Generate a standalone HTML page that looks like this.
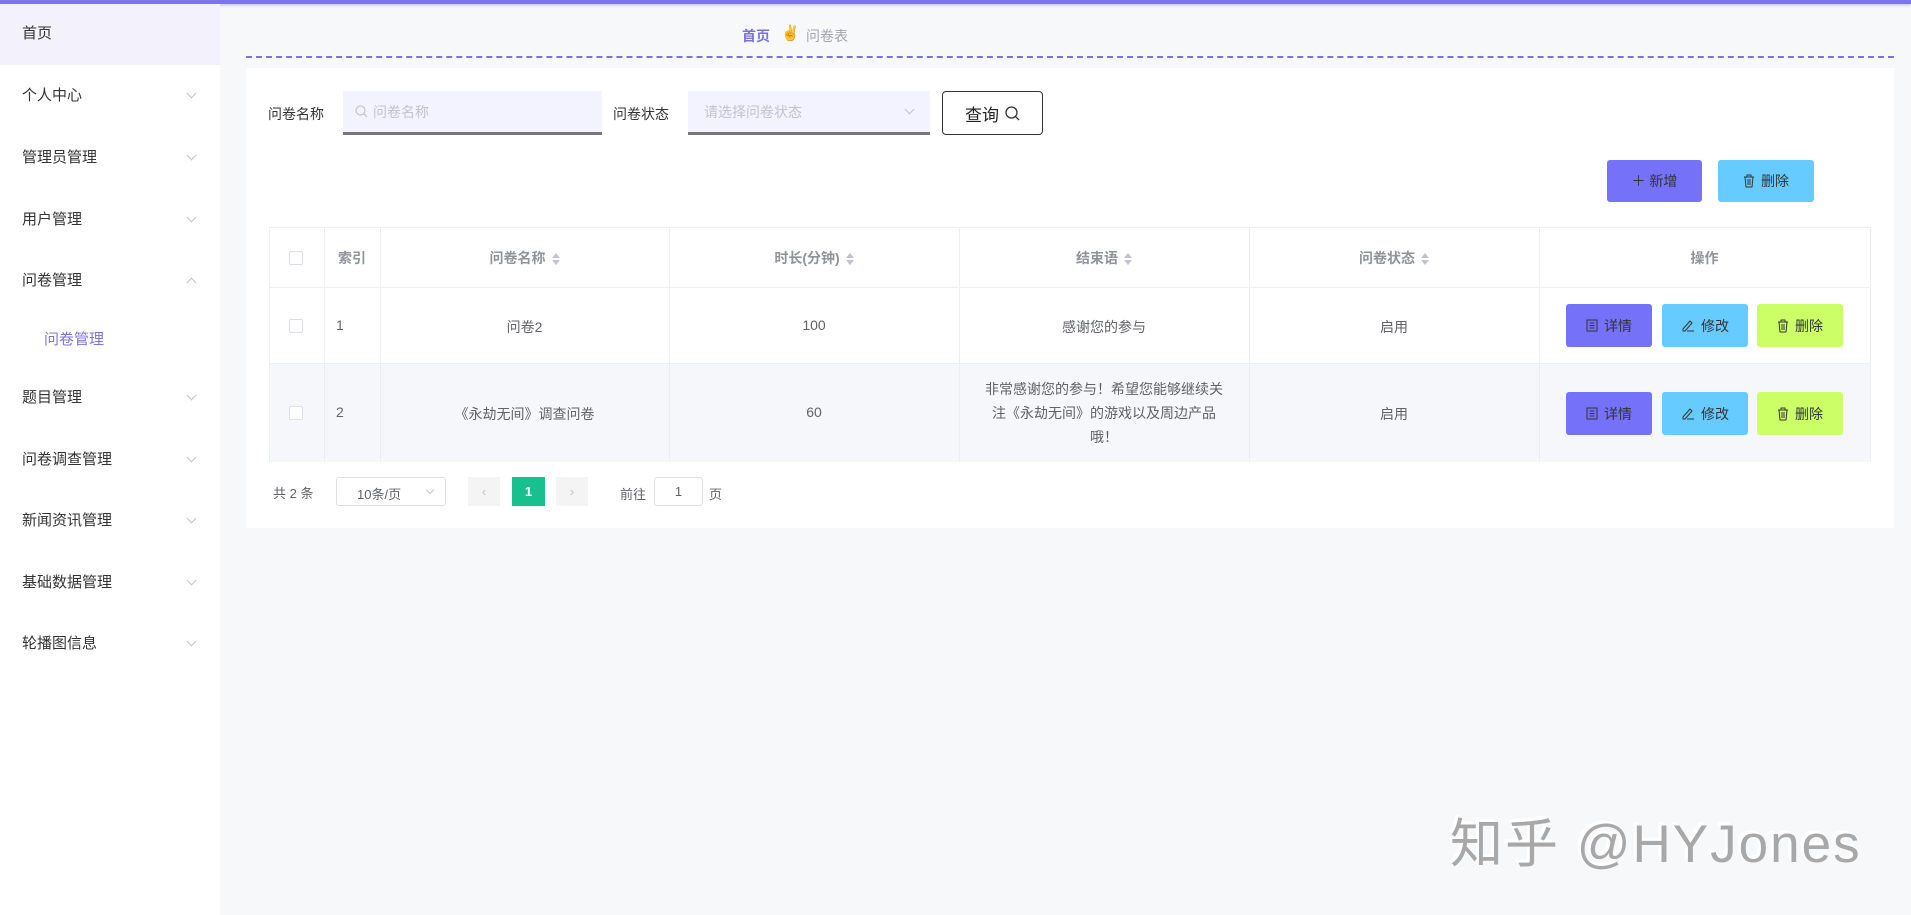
<!DOCTYPE html>
<html><head><meta charset="utf-8"><style>
*{margin:0;padding:0;box-sizing:border-box}
body{width:1911px;height:915px;background:#f7f8fa;font-family:"Liberation Sans","Noto Sans CJK SC",sans-serif;position:relative;overflow:hidden;color:#333}
.a{position:absolute}
.top{left:0;top:0;width:1911px;height:4px;background:#7b74ee;box-shadow:0 1px 3px rgba(100,90,230,.4)}
.side{left:0;top:4px;width:220px;height:911px;background:#fff}
.mi{position:absolute;left:22px;font-size:15px;color:#333;line-height:20px}
.chev{position:absolute;left:188px;width:7px;height:7px;border-right:1px solid #c0c4cc;border-bottom:1px solid #c0c4cc;transform:rotate(45deg)}
.chevu{transform:rotate(-135deg)}
.card{left:246px;top:68px;width:1648px;height:460px;background:#fff}
.lbl{font-size:14px;color:#333}
.inp{background:#f3f2ff;border-bottom:3px solid #777;font-size:14px;color:#c0c4cc;display:flex;align-items:center;gap:5px}
.btn{position:absolute;border-radius:3px;font-size:14px;color:#333;display:flex;align-items:center;justify-content:center;gap:6px}
.tbl{left:269px;top:227px;width:1602px;height:235px;border:1px solid #ebeef5}
.vl{position:absolute;top:0;width:1px;height:234px;background:#ebeef5}
.hl{position:absolute;left:0;width:1600px;height:1px;background:#ebeef5}
.c{position:absolute;font-size:14px;color:#606266;text-align:center}
.h{color:#909399;font-weight:bold}
.cb{position:absolute;left:19px;width:14px;height:14px;border:1px solid #dcdfe6;border-radius:2px;background:#fff}
.sort{display:inline-block;vertical-align:middle;margin-left:6px;width:8px;height:12px;position:relative}
.sort:before{content:"";position:absolute;left:0;top:0;border:4px solid transparent;border-bottom:5px solid #c0c4cc;border-top:0}
.sort:after{content:"";position:absolute;left:0;top:7px;border:4px solid transparent;border-top:5px solid #c0c4cc;border-bottom:0}
svg{display:block}
</style></head><body>
<div class="a top"></div>
<div class="a side">
 <div class="a" style="left:0;top:0;width:220px;height:61px;background:#f3f2fc"></div>
 <div class="mi" style="top:20px">首页</div>
 <div class="mi" style="top:82px">个人中心</div><div class="chev" style="top:86px"></div>
 <div class="mi" style="top:144px">管理员管理</div><div class="chev" style="top:148px"></div>
 <div class="mi" style="top:206px">用户管理</div><div class="chev" style="top:210px"></div>
 <div class="mi" style="top:267px">问卷管理</div><div class="chev chevu" style="top:275px"></div>
 <div class="mi" style="top:326px;left:44px;color:#7b74d8">问卷管理</div>
 <div class="mi" style="top:384px">题目管理</div><div class="chev" style="top:388px"></div>
 <div class="mi" style="top:446px">问卷调查管理</div><div class="chev" style="top:450px"></div>
 <div class="mi" style="top:507px">新闻资讯管理</div><div class="chev" style="top:511px"></div>
 <div class="mi" style="top:569px">基础数据管理</div><div class="chev" style="top:573px"></div>
 <div class="mi" style="top:630px">轮播图信息</div><div class="chev" style="top:634px"></div>
</div>
<div class="a" style="left:742px;top:26px;font-size:14px;font-weight:bold;color:#7b74d8">首页</div>
<div class="a" style="left:781px;top:24px;font-size:15px">✌️</div>
<div class="a" style="left:806px;top:26px;font-size:14px;color:#a0a4ad">问卷表</div>
<div class="a" style="left:246px;top:56px;width:1648px;border-top:2px dashed #7b74d8"></div>
<div class="a card"></div>
<div class="a lbl" style="left:268px;top:104px">问卷名称</div>
<div class="a inp" style="left:343px;top:91px;width:259px;height:44px;padding:0 0 0 12px"><svg width="13" height="13" viewBox="0 0 13 13"><circle cx="5.5" cy="5.5" r="4.5" fill="none" stroke="#c0c4cc" stroke-width="1.2"/><path d="M9 9l3 3" stroke="#c0c4cc" stroke-width="1.2"/></svg>问卷名称</div>
<div class="a lbl" style="left:613px;top:104px">问卷状态</div>
<div class="a inp" style="left:688px;top:91px;width:242px;height:44px;padding:0 0 0 16px">请选择问卷状态</div>
<div class="chev" style="left:906px;top:106px"></div>
<div class="btn" style="left:942px;top:91px;width:101px;height:44px;border:1px solid #333;border-radius:4px;font-size:17px;color:#222">查询 <svg width="15" height="15" viewBox="0 0 15 15"><circle cx="6.5" cy="6.5" r="5.5" fill="none" stroke="#333" stroke-width="1.3"/><path d="M10.5 10.5l3.5 3.5" stroke="#333" stroke-width="1.3"/></svg></div>
<div class="btn" style="left:1607px;top:160px;width:95px;height:42px;background:#7571f9;color:#333">＋ 新增</div>
<div class="btn" style="left:1718px;top:160px;width:96px;height:42px;background:#66ccff;color:#333"><svg width="12" height="14" viewBox="0 0 12 14"><path d="M1 3h10M4 3V1h4v2M2 3l1 10h6l1-10M5 5v6M7 5v6" fill="none" stroke="#333" stroke-width="1"/></svg>删除</div>
<div class="a tbl">
 <div class="a" style="left:0;top:136px;width:1600px;height:98px;background:#f5f7fa"></div>
 <div class="vl" style="left:54px"></div><div class="vl" style="left:110px"></div><div class="vl" style="left:399px"></div><div class="vl" style="left:689px"></div><div class="vl" style="left:979px"></div><div class="vl" style="left:1269px"></div>
 <div class="hl" style="top:59px"></div><div class="hl" style="top:135px"></div>
 <div class="cb" style="top:23px"></div><div class="cb" style="top:91px"></div><div class="cb" style="top:178px"></div>
 <div class="c h" style="left:54px;width:56px;top:20px">索引</div>
 <div class="c h" style="left:110px;width:289px;top:20px">问卷名称<span class="sort"></span></div>
 <div class="c h" style="left:399px;width:290px;top:20px">时长(分钟)<span class="sort"></span></div>
 <div class="c h" style="left:689px;width:290px;top:20px">结束语<span class="sort"></span></div>
 <div class="c h" style="left:979px;width:290px;top:20px">问卷状态<span class="sort"></span></div>
 <div class="c h" style="left:1269px;width:331px;top:20px">操作</div>
 <div class="c" style="left:66px;top:89px">1</div>
 <div class="c" style="left:110px;width:289px;top:89px">问卷2</div>
 <div class="c" style="left:399px;width:290px;top:89px">100</div>
 <div class="c" style="left:689px;width:290px;top:89px">感谢您的参与</div>
 <div class="c" style="left:979px;width:290px;top:89px">启用</div>
 <div class="c" style="left:66px;top:176px">2</div>
 <div class="c" style="left:110px;width:289px;top:176px">《永劫无间》调查问卷</div>
 <div class="c" style="left:399px;width:290px;top:176px">60</div>
 <div class="c" style="left:712px;width:244px;top:149px;line-height:24px">非常感谢您的参与！希望您能够继续关注《永劫无间》的游戏以及周边产品哦！</div>
 <div class="c" style="left:979px;width:290px;top:176px">启用</div>
</div>
<div class="btn" style="left:1566px;top:304px;width:86px;height:43px;background:#7571f9"><svg width="12" height="13" viewBox="0 0 12 13"><path d="M1 1h10v11H1zM3.5 4h5M3.5 6.5h5M3.5 9h5" fill="none" stroke="#333" stroke-width="1"/></svg>详情</div>
<div class="btn" style="left:1662px;top:304px;width:86px;height:43px;background:#66ccff"><svg width="14" height="13" viewBox="0 0 14 13"><path d="M2 10l7-8 2 2-7 8H2zM6 12h7" fill="none" stroke="#333" stroke-width="1"/></svg>修改</div>
<div class="btn" style="left:1757px;top:304px;width:86px;height:43px;background:#ccff66"><svg width="12" height="14" viewBox="0 0 12 14"><path d="M1 3h10M4 3V1h4v2M2 3l1 10h6l1-10M5 5v6M7 5v6" fill="none" stroke="#333" stroke-width="1"/></svg>删除</div>
<div class="btn" style="left:1566px;top:392px;width:86px;height:43px;background:#7571f9"><svg width="12" height="13" viewBox="0 0 12 13"><path d="M1 1h10v11H1zM3.5 4h5M3.5 6.5h5M3.5 9h5" fill="none" stroke="#333" stroke-width="1"/></svg>详情</div>
<div class="btn" style="left:1662px;top:392px;width:86px;height:43px;background:#66ccff"><svg width="14" height="13" viewBox="0 0 14 13"><path d="M2 10l7-8 2 2-7 8H2zM6 12h7" fill="none" stroke="#333" stroke-width="1"/></svg>修改</div>
<div class="btn" style="left:1757px;top:392px;width:86px;height:43px;background:#ccff66"><svg width="12" height="14" viewBox="0 0 12 14"><path d="M1 3h10M4 3V1h4v2M2 3l1 10h6l1-10M5 5v6M7 5v6" fill="none" stroke="#333" stroke-width="1"/></svg>删除</div>
<div class="a" style="left:273px;top:483px;font-size:13px;color:#606266">共 2 条</div>
<div class="a" style="left:336px;top:477px;width:110px;height:29px;border:1px solid #dcdfe6;border-radius:3px;font-size:13px;color:#606266;padding:6px 0 0 20px">10条/页</div>
<div class="chev" style="left:427px;top:487px;width:6px;height:6px"></div>
<div class="a" style="left:468px;top:477px;width:32px;height:29px;background:#f4f4f5;color:#c0c4cc;text-align:center;line-height:29px;font-size:13px">‹</div>
<div class="a" style="left:512px;top:477px;width:33px;height:29px;background:#19c08f;color:#fff;text-align:center;line-height:29px;font-size:13px;font-weight:bold">1</div>
<div class="a" style="left:556px;top:477px;width:32px;height:29px;background:#f4f4f5;color:#c0c4cc;text-align:center;line-height:29px;font-size:13px">›</div>
<div class="a" style="left:620px;top:484px;font-size:13px;color:#606266">前往</div>
<div class="a" style="left:654px;top:477px;width:49px;height:29px;border:1px solid #dcdfe6;border-radius:3px;text-align:center;line-height:27px;font-size:13px;color:#606266">1</div>
<div class="a" style="left:709px;top:484px;font-size:13px;color:#606266">页</div>
<div class="a" style="left:1450px;top:802px;font-size:53px;color:#a8a8a8;letter-spacing:2px;text-shadow:-3px -3px 0 #fff">知乎 @HYJones</div>
</body></html>
